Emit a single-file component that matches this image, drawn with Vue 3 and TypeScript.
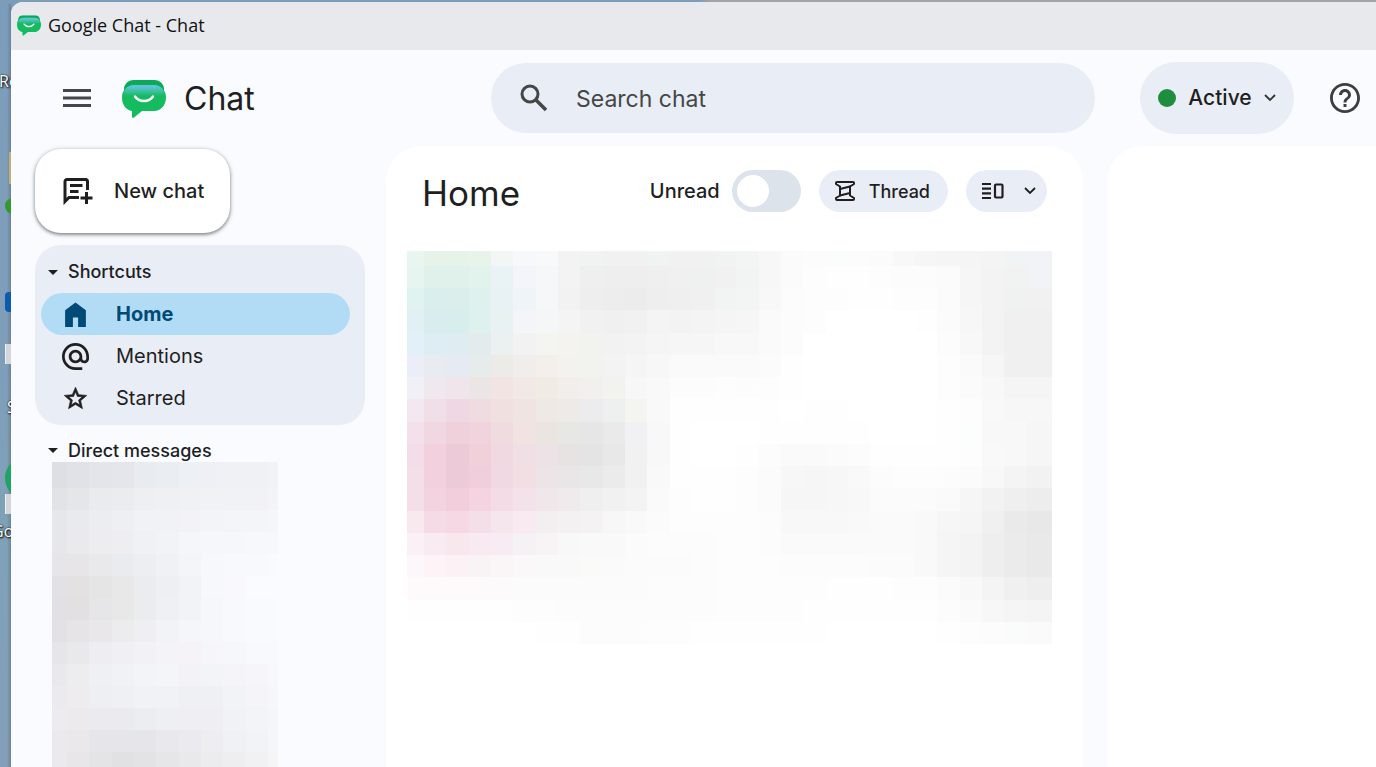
<script setup lang="ts">
import { ref } from 'vue'

const search = ref('')
const unreadOnly = ref(false)

// Each token is one cell: two digits for a neutral grey, six for a tinted colour.
function toCells(rows: string[]): string[] {
  return rows
    .join(' ')
    .split(' ')
    .map((t) => '#' + (t.length === 2 ? t + t + t : t))
}

const feedCells = toCells([
  'e9f5ef e7f3e9 e6f3e8 e8f3ea f2f6f5 f6f9fb f7f9fb f3 f0f3f1 f1 f1 eff3f1 f1 f1 f0f3f1 f3f5f4 f7 fb fc fafdfc fc fb f8 f6 f5 f5 f4 f1f4f5 f2f3f7',
  'e6f5ef e0f1ec e0f1eb e2f3ee e9f3f6 f3f5fa f6f7f9 f3 ef ee ee ef f0 eef1ef f1 f2f4f3 f7 fb fd fe fe fd fc fc fb f6 f3 f1f3f2 f1f3f6',
  'e1f3f1 daeeed dceeec def1ef e8f2f5 eef4f7 f6f7f8 f2 ee ed ec ee ef f0 f2f4f3 f3f5f4 f8 fc fd fd fe fe fd fd fb f6 f3 f0f2f1 f1',
  'e1f0f5 d9edef d8eeed dff1ee e9f2f3 f3f5f8 f5f6f8 f4 f1 f0 f1 f4 f3 f4 f5 f6 fa fc fd ff ff ff ff fe fb f7 f3 f0 f0',
  'e2f1f7 deedf3 dfecf1 e4ebed ebf0f0 f1f2f1 f4f4f1 f4f3f0 f2f3ef f2 f3 f5 f6 f6 f8 f8 fa fc ff ff ff ff ff ff fc f8 f3 f0 f0',
  'ebeef9 e8ecf1 e6eaf2 e6ecec ecebe7 f1edeb f5efeb f3f2ee f2f3ef f3 f5 f7 fa fa fa fa fb fe ff ff ff ff ff ff fd fa f6 f0 f0',
  'f1f0f6 efe9ef efe5eb ece5e5 f1e4e2 f2e8e6 f1ebe6 f2eeec f1f0ed f2f3ef f7 f9 fc fc fd fc fd fe ff ff ff ff ff ff fd fb f8 f5 f5',
  'f4e8f0 f1dfe8 efd8e3 efdce0 f0e0df f0e4e2 eee9e4 edeae8 ecebed eeefef f4f5f1 f9 fe fe fe fe fe ff fe fe ff ff ff ff fe fd f9 f7 f7',
  'f3e0ea f1d7e2 efd1dc f0d3dc eedcdf f0e3e2 ebe5e2 e7e7e3 e6 ea f1f1f3 f8 fe ff ff ff fe fe fe fe fe ff ff ff fe fcfefd f8 f8 f6',
  'f4dde8 f2d0dd edcad8 f1d0da f0d9e1 f0dfe4 ede2e5 e7e3e3 e4 e8 f1 f8 fe ff ff fe fc fa fa fb fc fe fe fe fe fd f9 f8 f6',
  'f4dee8 f2d0dd edcad8 f0cedb f0d9e2 f2dfe4 ede4e7 e9e6e7 e8 eb f1 f9 fe fe fe fd fb f7 f6 f7 f9 fc fd fd fc fb f8 f4 f2',
  'f4dfe9 f3d3df f2cedc f5d3e0 f3dce6 f3e2e9 efe7ea efebed ef f1 f3 fa fd fe fe fd fb f6 f6 f7 f8 fb fb fb fa f6 f2 ef ed',
  'f8e9ef f5dbe6 f6d8e4 f4dee8 f5e5ed f8eaf0 f3eeef f4f1f3 f5f2f4 f7 f9 fb fd fd fd fd fc f8 f8 f8 f9 fa fa f9 f6 f5 f0 ea e8',
  'fcf0f7 f9ebf2 f8e8ed f9e9f1 f8ebf3 f4f2f4 f8f4f6 f8 f9 f9 fb fc fc fc fd fd fc fa fa fa fa fa fa f9 f5 f3 ee eb e9',
  'fbf7fb fef3f7 fcf2f6 f8f4f6 faf6f7 faf8f8 f9 f9 fafaf8 fa fb fb fb fc fd fd fd fc fc fc fc fb fb f9 f5 f3 ee eb e9',
  'fefafb fdfafc fdfafc fdfafb fdfafb fb fb fb fb fb fb fc fc fc fd fd fd fd fd fe fe fe fd fd fb f8 f4 f0 ee',
  'fe fe fe fe fe fd fd fc fc fc fc fc fc fc fd fd fd fd fe fe fe fe fe fe fc fa f7 f5 f4',
  'ff ff ff ff ff ff fe fe fc fc fc fd fd fe fe fe fe fe fe ff ff ff ff ff fe fd fc fafcfb fa',
])

const peopleCells = toCells([
  'dddfe4 e0e2e7 e3e5ea e4e6eb e8ecf1 eaedf2 edf0f4 eff0f5 f0f1f5 f0f1f5 f2f3f7',
  'e2e3e6 e4e6ea eaebef ebecf0 edeff2 eff0f3 f0f1f4 f1f2f5 f1f2f5 f2f2f6 f3f4f7',
  'e6e7ea e9eaee ecedf1 eeeff2 f1f2f5 f1f2f6 f3f3f7 f3f4f7 f4f5f8 f4f5f9 f5f6fa',
  'e7e7ea eaeaed edecef eeedf0 f0f1f4 f2f3f6 f5f6fa f6f7fa f6f7fb f7f8fb f7f8fc',
  'e6e5e7 e7e5e8 e9e9ec eaebee eceef1 f0f1f4 f4f5f8 f7f8fc f8f9fd f8f9fd f9fafe',
  'e2e1e3 e4e1e3 e6e5e6 e8e8e9 eaecef edeff2 f1f3f6 f7f8fc f9f8fc fafbff fafbff',
  'e2e0e2 e3e0e2 e6e5e7 e8e8e9 ebecee eff0f3 f2f3f7 f6f7fb f8f9fd f9fafe f9fafe',
  'e3e1e4 e6e4e7 eae7eb ecebee efeff3 f2f3f7 f5f6fa f6f7fb f8f9fd f9fafe f9fafe',
  'e6e5e8 e9e9ec eeeef2 f0f0f4 f2f1f5 f4f4f8 f5f3f7 f6f5f9 f6f7fb f8f9fc f8f9fd',
  'e9e9eb ededf0 eff0f3 f1f2f5 f3f4f8 f4f5f9 f3f3f7 f3f4f7 f5f5f9 f6f6fa f8f7fb',
  'ebebed eeecef eeeff2 eff0f3 f1f2f6 f1f2f6 eff0f4 eff0f3 f2f3f6 f5f5f9 f6f7fa',
  'edebed edeaed ebeaee ebeaee ecedf1 eeeff2 efeff3 efeff3 f1f2f5 f3f4f7 f5f6fa',
  'ece9ec ebe8eb e6e5e9 e6e5e9 e6e6ea e9e9ed ebebef eeeef1 f0f1f4 f2f3f6 f5f6f9',
  'ece9ec e9e6e9 e4e3e6 e1e1e4 e3e3e6 e6e6e9 e9e9ec ecebee eeeef1 f1f1f4 f5f5f8',
])
</script>

<template>
  <div class="desktop">
    <div class="desk-icons" aria-hidden="true">
      <span class="desk-text t1">Re</span>
      <span class="folder"></span>
      <span class="check"></span>
      <span class="blue"></span>
      <span class="shortcut s1"></span>
      <span class="desk-text t2">S</span>
      <span class="green"></span>
      <span class="shortcut s2"></span>
      <span class="desk-text t3">Go</span>
    </div>

    <div class="window">
      <svg width="0" height="0" class="defs" aria-hidden="true">
        <defs>
          <linearGradient id="visor" x1="0" y1="0" x2="0" y2="1">
            <stop offset="0" stop-color="#62c5dc" />
            <stop offset="0.300" stop-color="#55c3c8" />
            <stop offset="1" stop-color="#14bc5f" />
          </linearGradient>
          <symbol id="logo" viewBox="0 0 44 38">
            <rect x="2" y="0" width="40" height="24" rx="9" fill="#0ea85c" />
            <path d="M12 5h20c7 0 12 5 12 12.500S39 31 32 31H20l-8 6.500c-1 .8-2 .3-2-1V31C4 30 0 25 0 17.500S5 5 12 5z" fill="#14bc5f" />
            <path d="M12 5h20c5 0 9 3 10 7 0 3-3 4-7 4H9c-4 0-7-1-7-4 1-4 5-7 10-7z" fill="url(#visor)" />
            <path d="M13 16.500c4 6 14 6 18 0" fill="none" stroke="#fff" stroke-width="2.400" stroke-linecap="round" />
          </symbol>
        </defs>
      </svg>

      <div class="titlebar">
        <svg class="logo-small" viewBox="0 0 44 38" aria-hidden="true"><use href="#logo" /></svg>
        <span>Google Chat - Chat</span>
      </div>

      <header class="header">
        <div class="brand">
          <button class="icon-btn" type="button" aria-label="Main menu">
            <svg width="28" height="20" viewBox="0 0 28 20"><path d="M0 2.500h28M0 10h28M0 17.500h28" stroke="#444746" stroke-width="3" /></svg>
          </button>
          <svg class="logo" viewBox="0 0 44 38" aria-hidden="true"><use href="#logo" /></svg>
          <span class="brand-name">Chat</span>
        </div>
        <label class="search">
          <svg width="28" height="28" viewBox="0 0 28 28" fill="none" stroke="#444746" stroke-width="3" aria-hidden="true">
            <circle cx="10" cy="10" r="8" />
            <path d="M16 16l10 10" stroke-width="3.600" />
          </svg>
          <input v-model="search" type="text" placeholder="Search chat" aria-label="Search chat" />
        </label>
        <button class="status" type="button">
          <span class="dot"></span>
          <span>Active</span>
          <svg width="12" height="8" viewBox="0 0 12 8"><path d="M1 1l5 5 5-5" fill="none" stroke="#333" stroke-width="1.800" /></svg>
        </button>
        <button class="icon-btn help" type="button" aria-label="Support">
          <svg width="30" height="30" viewBox="2 2 20 20" fill="#3c3f3e"><path d="M11 18h2v-2h-2v2zm1-16C6.480 2 2 6.480 2 12s4.480 10 10 10 10-4.480 10-10S17.520 2 12 2zm0 18.100c-4.500 0-8.100-3.600-8.100-8.100S7.500 3.900 12 3.900s8.100 3.600 8.100 8.100-3.600 8.100-8.100 8.100zM12 6c-2.210 0-4 1.790-4 4h2c0-1.100.9-2 2-2s2 .9 2 2c0 2-3 1.750-3 5h2c0-2.250 3-2.500 3-5 0-2.210-1.790-4-4-4z" /></svg>
        </button>
      </header>

      <div class="body">
        <aside class="sidebar">
          <button class="new-chat" type="button">
            <svg width="30" height="28" viewBox="0 0 30 28" fill="none" stroke="#1f1f1f" stroke-width="3" aria-hidden="true">
              <path d="M24.500 13V4.500A2 2 0 0 0 22.500 2.500H4A2 2 0 0 0 2 4.500V24.500l4-4H16" />
              <path d="M7 8.500h12.500M7 14.500h8.500" stroke-width="2.800" />
              <path d="M23.500 15v12M17.500 21h12" />
            </svg>
            <span>New chat</span>
          </button>

          <section class="shortcuts">
            <button class="section-head" type="button"><i class="caret"></i>Shortcuts</button>
            <nav>
              <a class="item active" href="#home">
                <svg viewBox="0 0 26 26" fill="#004a77"><path d="M13 1.500L3 9v16h7.500v-9h5v9H23V9z" /></svg>
                Home
              </a>
              <a class="item" href="#mentions">
                <svg viewBox="2 2 20 20" fill="#1f1f1f"><path d="M12 2C6.480 2 2 6.480 2 12s4.480 10 10 10h5v-2h-5c-4.340 0-8-3.660-8-8s3.660-8 8-8 8 3.660 8 8v1.430c0 .79-.71 1.570-1.500 1.570s-1.500-.78-1.500-1.570V12c0-2.760-2.240-5-5-5s-5 2.240-5 5 2.240 5 5 5c1.380 0 2.640-.56 3.540-1.470.65.89 1.770 1.470 2.960 1.470 1.970 0 3.500-1.600 3.500-3.570V12c0-5.520-4.480-10-10-10zm0 13c-1.660 0-3-1.340-3-3s1.340-3 3-3 3 1.340 3 3-1.340 3-3 3z" /></svg>
                Mentions
              </a>
              <a class="item" href="#starred">
                <svg viewBox="0 0 24 24" fill="#1f1f1f" stroke="#1f1f1f" stroke-width="0.600"><path d="M22 9.240l-7.190-.62L12 2 9.190 8.630 2 9.240l5.460 4.730L5.820 21 12 17.270 18.180 21l-1.630-7.030L22 9.240zM12 15.400l-3.760 2.270 1-4.280-3.320-2.880 4.380-.38L12 6.100l1.710 4.040 4.380.38-3.320 2.880 1 4.280L12 15.400z" /></svg>
                Starred
              </a>
            </nav>
          </section>

          <section class="direct">
            <button class="section-head" type="button"><i class="caret"></i>Direct messages</button>
            <div class="people">
              <i v-for="(c, i) in peopleCells" :key="i" :style="{ background: c }"></i>
            </div>
          </section>
        </aside>

        <main class="panel">
          <div class="panel-head">
            <h1>Home</h1>
            <label class="unread">
              Unread
              <input v-model="unreadOnly" type="checkbox" role="switch" />
            </label>
            <button class="chip thread" type="button">
              <svg width="20" height="20" viewBox="0 0 20 20" fill="none" stroke="#1f1f1f" stroke-width="2" stroke-linejoin="round" stroke-linecap="round">
                <path d="M2 1h16q1 0 1 1v1l-4 2.500v9l4 2.500v1q0 1-1 1H2q-1 0-1-1v-1l4-2.500v-9L1 3V2q0-1 1-1z" />
                <path d="M5 8l10-2.500M5 14.500l10-2.500" />
              </svg>
              Thread
            </button>
            <button class="chip view" type="button" aria-label="View options">
              <svg width="22" height="16" viewBox="0 0 22 16" fill="none" stroke="#1f1f1f" stroke-width="2.200">
                <path d="M0 1h9M0 5.700h9M0 10.300h9M0 15h9" />
                <rect x="13" y="1.500" width="7.500" height="13" rx="1" />
              </svg>
              <svg width="12" height="8" viewBox="0 0 12 8"><path d="M1 1l5 5 5-5" fill="none" stroke="#1f1f1f" stroke-width="1.800" /></svg>
            </button>
          </div>
          <div class="feed">
            <i v-for="(c, i) in feedCells" :key="i" :style="{ background: c }"></i>
          </div>
        </main>

        <section class="panel detail"></section>
      </div>
    </div>
  </div>
</template>

<style>
body {
  margin: 0;
  overflow: hidden;
}
</style>

<style scoped>
* {
  box-sizing: border-box;
}
button {
  border: 0;
  padding: 0;
  margin: 0;
  background: none;
  font: inherit;
  color: inherit;
  cursor: pointer;
}
svg {
  flex: none;
}
.desktop {
  position: relative;
  height: 100vh;
  padding: 2px 0 0 11px;
  overflow: hidden;
  background: linear-gradient(90deg, transparent 700px, #a3a2a8 710px) 0 0 / 100% 2px no-repeat,
    linear-gradient(90deg, rgba(80, 90, 105, 0) 7px, rgba(80, 90, 105, 0.4) 11px) 0 4px / 11px 100% no-repeat,
    linear-gradient(#7c9dba, #7f9eb9 50%, #7fa2b8 70%, #839eb8);
  font-family: Inter, 'Liberation Sans', sans-serif;
  color: #1f1f1f;
}
.desk-icons span {
  position: absolute;
}
.desk-text {
  font: 16px/20px 'Open Sans', sans-serif;
  color: #fff;
  text-shadow: 1px 1px 2px #000, 0 0 2px #000;
}
.t1 {
  left: -1px;
  top: 71px;
}
.t2 {
  left: 7px;
  top: 397px;
}
.t3 {
  left: -8px;
  top: 521px;
}
.folder {
  left: 9px;
  top: 152px;
  width: 8px;
  height: 32px;
  background: #c3ad70;
}
.check {
  left: 5px;
  top: 198px;
  width: 16px;
  height: 16px;
  border-radius: 50%;
  background: #35982f;
}
.blue {
  left: 5px;
  top: 292px;
  width: 16px;
  height: 20px;
  border-radius: 4px;
  background: #0b5cad;
}
.shortcut {
  left: 5px;
  width: 16px;
  height: 20px;
  background: #d3d7dc;
  border-left: 1px solid #f0f0f0;
}
.s1 {
  top: 344px;
}
.green {
  left: 5px;
  top: 456px;
  width: 44px;
  height: 44px;
  border-radius: 50%;
  background: #1fa463;
}
.s2 {
  top: 494px;
}
.window {
  position: relative;
  height: 100%;
  display: flex;
  flex-direction: column;
  background: #f9fbff;
  border-top-left-radius: 12px;
  overflow: hidden;
}
.defs {
  position: absolute;
}
.titlebar {
  height: 48px;
  flex: none;
  display: flex;
  align-items: center;
  gap: 7px;
  padding: 0 0 2px 6px;
  background: #e8e9ed;
  font: 18px/24px 'Open Sans', 'Noto Sans', sans-serif;
  color: #111;
}
.logo-small {
  width: 24px;
  height: 21px;
}
.header {
  height: 96px;
  flex: none;
  display: flex;
  align-items: center;
  padding-right: 16px;
}
.brand {
  display: flex;
  align-items: center;
  width: 480px;
  padding-left: 52px;
}
.icon-btn {
  display: flex;
}
.logo {
  width: 44px;
  height: 38px;
  margin: 2px 18px 0 31px;
}
.brand-name {
  font-size: 32px;
  line-height: 40px;
  padding-top: 2px;
}
.search {
  flex: 1;
  min-width: 0;
  height: 70px;
  border-radius: 35px;
  background: #e9edf6;
  display: flex;
  align-items: center;
  gap: 28px;
  padding: 0 29px;
}
.search input {
  flex: 1;
  min-width: 0;
  border: 0;
  outline: 0;
  padding: 2px 0 0;
  background: none;
  font: 23px/32px Inter, 'Liberation Sans', sans-serif;
  color: #444746;
}
.search input::placeholder {
  color: #444746;
  opacity: 1;
}
.status {
  width: 154px;
  height: 72px;
  margin-left: 45px;
  border-radius: 36px;
  background: #e9edf6;
  display: flex;
  align-items: center;
  justify-content: center;
  gap: 12px;
  font-size: 21px;
  line-height: 28px;
  font-weight: 500;
}
.dot {
  width: 18px;
  height: 18px;
  border-radius: 50%;
  background: #1e8e3e;
}
.help {
  margin-left: 36px;
}
.body {
  flex: 1;
  min-height: 0;
  display: flex;
}
.sidebar {
  width: 375px;
  flex: none;
  display: flex;
  flex-direction: column;
  align-items: flex-start;
  padding: 3px 21px 0 24px;
}
.new-chat {
  height: 84px;
  flex: none;
  display: flex;
  align-items: center;
  gap: 21px;
  padding: 0 26px 0 28px;
  border-radius: 26px;
  background: #fff;
  box-shadow: 0 1px 4px rgba(60, 64, 67, 0.5), 0 2px 3px rgba(60, 64, 67, 0.3);
  font-size: 20px;
  font-weight: 500;
}
.shortcuts {
  align-self: stretch;
  margin-top: 12px;
  padding: 6px 15px 6px 6px;
  border-radius: 26px;
  background: #e9edf6;
}
.section-head {
  display: flex;
  align-items: center;
  gap: 10px;
  height: 42px;
  padding-left: 7px;
  font-size: 18px;
  line-height: 24px;
  font-weight: 500;
}
.caret {
  border: 5px solid transparent;
  border-top-color: #1f1f1f;
  border-bottom: 0;
}
.item {
  display: flex;
  align-items: center;
  gap: 27px;
  height: 42px;
  padding-left: 21px;
  border-radius: 21px;
  font-size: 20px;
  color: #1f1f1f;
  text-decoration: none;
}
.item svg {
  width: 27px;
  height: 27px;
}
.item.active {
  background: #b2dcf6;
  color: #004a77;
  font-weight: 700;
}
.direct {
  padding: 14px 0 0 6px;
  min-height: 0;
}
.direct .section-head {
  height: 23px;
}
.people {
  margin-left: 11px;
  width: 226px;
  display: grid;
  grid-template-columns: 15px repeat(9, 1fr) 10px;
  grid-template-rows: 26px;
  grid-auto-rows: 22px;
}
.panel {
  flex: 697 1 0;
  min-width: 0;
  background: #fff;
  border-radius: 36px 36px 0 0;
}
.detail {
  flex-grow: 269;
  margin-left: 24px;
  border-top-right-radius: 0;
}
.panel-head {
  display: flex;
  align-items: center;
  padding: 24px 36px 0;
}
h1 {
  flex: 1;
  margin: 4px 0 0;
  font-size: 35px;
  line-height: 38px;
  font-weight: 400;
}
.unread {
  display: flex;
  align-items: center;
  gap: 12px;
  font-size: 20px;
  font-weight: 500;
}
.unread input {
  appearance: none;
  margin: 0;
  width: 69px;
  height: 42px;
  padding: 5px;
  border-radius: 21px;
  background: #dde3ea;
}
.unread input::before {
  content: '';
  display: block;
  width: 32px;
  height: 32px;
  border-radius: 50%;
  background: #fff;
}
.unread input:checked {
  padding-left: 32px;
  background: #0b57d0;
}
.chip {
  height: 42px;
  margin-left: 18px;
  border-radius: 21px;
  background: #e9edf6;
  display: flex;
  align-items: center;
  font-size: 18px;
  font-weight: 500;
}
.thread {
  gap: 14px;
  padding: 0 18px 0 16px;
}
.view {
  width: 81px;
  justify-content: space-between;
  padding: 0 11px 0 16px;
}
.feed {
  height: 393px;
  margin: 39px 31px 0 21px;
  display: grid;
  grid-template-columns: 17px repeat(27, 22fr) 25fr;
  grid-template-rows: 15px repeat(17, 1fr);
}
</style>
